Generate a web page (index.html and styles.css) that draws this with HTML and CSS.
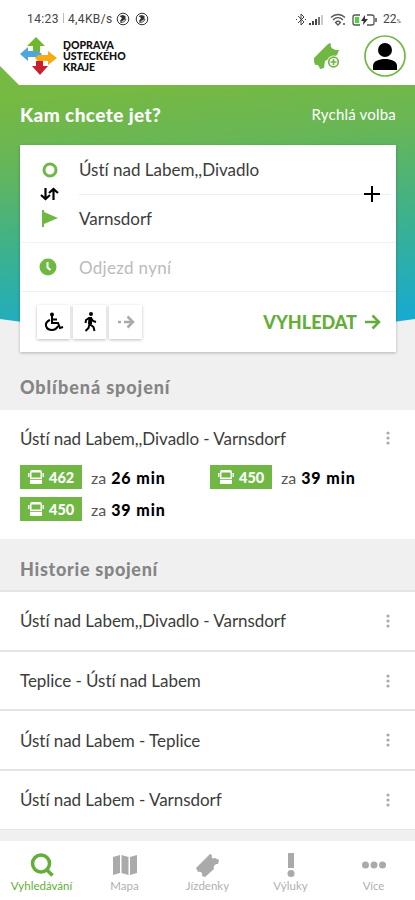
FILE: index.html
```html
<!DOCTYPE html>
<html lang="cs">
<head>
    <meta charset="UTF-8">
    <meta name="viewport" content="width=device-width, initial-scale=1.0">
    <title>Doprava Ústeckého kraje</title>
    <link rel="stylesheet" href="styles.css">
</head>
<body>
    <svg class="defs" width="0" height="0">
        <symbol id="dots" viewBox="0 0 6 14">
            <circle cx="3" cy="2" r="1.6"/><circle cx="3" cy="7" r="1.6"/><circle cx="3" cy="12" r="1.6"/>
        </symbol>
        <symbol id="bus" viewBox="0 0 16 16">
            <path d="M3 1h10l1 2v12H2V3z"/>
            <path d="M0 4h1.500v4H0zM14.500 4H16v4h-1.500z"/>
            <path d="M3.500 3.500h9v5h-9z" fill="#71b744"/>
            <path d="M2 10.500h12" stroke="#71b744" stroke-width=".8"/>
        </symbol>
        <symbol id="ticket" viewBox="0 0 24 24">
            <path d="M0 15L14 1l2 1c-1 3 1 4 3 3l4 2-1 4c-3 0-5 2-4 5L9 24l-3-1c1-3-1-5-4-4z"/>
        </symbol>
        <symbol id="face" viewBox="0 0 14 14">
            <circle cx="7" cy="7" r="5.800" fill="none" stroke="#333" stroke-width="1"/>
            <path d="M3.500 4l3-1 3 1v3L5 10l-1-1 2-3z" fill="#333"/>
            <path d="M4 10c2 1 5 0 6-3" fill="none" stroke="#333"/>
        </symbol>
    </svg>

    <header>
        <div class="status">
            <span class="time">14:23<i></i>4,4KB/s</span>
            <svg class="face" width="14" height="14"><use href="#face"/></svg>
            <svg class="face" width="14" height="14"><use href="#face"/></svg>
            <svg class="signals" width="86" height="16" viewBox="0 0 86 16">
                <path d="M3 5l6 6-3 3V3l3 3-6 6M1 8.500h1M10 8.500h1" fill="none" stroke="#444"/>
                <path d="M14 12h2v2h-2zM17 10h2v4h-2zM20 8h2v6h-2z" fill="#444"/>
                <path d="M23 6h2v8h-2z" fill="#777"/><path d="M26 4h2v10h-2z" fill="#ccc"/>
                <g fill="none" stroke="#555" stroke-width="1.300">
                    <path d="M36 6.500c4-4 10-4 14 0M38 9c3-3 7-3 10 0M40.500 11.500c1.500-1.500 3.500-1.500 5 0L43 14z"/>
                    <rect x="58" y="4" width="21" height="10" rx="2"/>
                </g>
                <path d="M48 12h2v2h-2zM80 7h2v4h-2z" fill="#777"/>
                <path d="M60 6h4v6h-4z" fill="#42dc2c"/>
                <path d="M65 3h7v12h-7z" fill="#fff"/>
                <path d="M70 4l-4 6h2.500l-.5 4 5-6h-3z" fill="#333"/>
            </svg>
            <span class="percent">22<small>%</small></span>
        </div>
        <div class="topbar">
            <svg class="logo" width="38" height="38" viewBox="0 0 38 38">
                <path d="M16 0l9 9h-5v6h-7V9H7z" fill="#70b82b"/>
                <path d="M0 17l8-7v4h10l4 3-3 3H8v4z" fill="#4ea6d9"/>
                <path d="M37 21l-9-7v4H18l-3 3 3 3h10v4z" fill="#f7aa13"/>
                <path d="M20 38l-8-9h4v-5h7v5h5z" fill="#c9202c"/>
            </svg>
            <div class="brand">DOPRAVA<br>ÚSTECKÉHO<br>KRAJE</div>
            <svg class="add-ticket" width="28" height="28" viewBox="0 0 28 28">
                <path d="M1 16L14 3l3-2 1 1c-1 3 1 5 5 6h3l-2 5-12 6-1 7-4 1c-1-4-3-5-5-4l-1-4z" fill="#70b744"/>
                <circle cx="20.500" cy="20" r="6.500" fill="#fff"/>
                <circle cx="20.500" cy="20" r="4.800" fill="#fff" stroke="#70b744" stroke-width="1.700"/>
                <path d="M20.500 17v6M17.500 20h6" stroke="#70b744" stroke-width="1.700"/>
            </svg>
            <svg class="avatar" width="42" height="42" viewBox="0 0 42 42">
                <circle cx="21" cy="21" r="20" fill="#fff" stroke="#70b744" stroke-width="1.700"/>
                <circle cx="21" cy="15" r="7"/>
                <path d="M9 35v-4c0-5 6-7 12-7s12 2 12 7v4z"/>
            </svg>
        </div>
    </header>

    <section class="hero">
        <div class="hero-head">
            <h1>Kam chcete jet?</h1>
            <span class="quick">Rychlá volba</span>
        </div>
        <div class="search">
            <div class="route">
                <div class="route-icons">
                    <svg width="16" height="16"><circle cx="8" cy="8" r="6" fill="none" stroke="#70b744" stroke-width="3"/></svg>
                    <svg width="20" height="16" viewBox="0 0 20 16" fill="none" stroke="#000" stroke-width="2.200"><path d="M5.500 2v11M1 9l4.500 4L10 9M13.500 14V3M9 7l4.500-4L18 7"/></svg>
                    <svg width="16" height="18" viewBox="0 0 16 18" fill="#70b744"><path d="M0 0h2v17H0zM2 2l14 6-14 6z"/></svg>
                </div>
                <div class="stops">
                    <div class="stop">Ústí nad Labem,,Divadlo</div>
                    <div class="stop to">Varnsdorf</div>
                    <svg class="plus" width="16" height="16" viewBox="0 0 16 16"><path d="M8 0v16M0 8h16" stroke="#000" stroke-width="2"/></svg>
                </div>
            </div>
            <div class="when">
                <svg width="18" height="18" viewBox="0 0 18 18"><circle cx="9" cy="9" r="8.500" fill="#70b744"/><path d="M8.500 4v5.500l3 2.500" fill="none" stroke="#fff" stroke-width="2"/></svg>
                <span>Odjezd nyní</span>
            </div>
            <div class="actions">
                <div class="option">
                    <svg width="20" height="20" viewBox="0 0 20 20" fill="none" stroke="#000" stroke-width="2"><circle cx="8" cy="2.500" r="2" fill="#000" stroke="none"/><path d="M8 4v7h6l2 5 3-1M8 7.500h5M6 8c-7 3-4 10 2 10 3 0 5-2 6-4"/></svg>
                </div>
                <div class="option">
                    <svg width="20" height="20" viewBox="0 0 20 20" fill="none" stroke="#000" stroke-width="2"><circle cx="11" cy="2" r="2" fill="#000" stroke="none"/><path d="M9.500 5v7l4 3 1 4M9.500 12l-1 4-3 3M9 6L6 8l-.5 3M11 6l2 3 3 1"/><path d="M9 5h3v7H8z" fill="#000" stroke="none"/></svg>
                </div>
                <div class="option">
                    <svg width="18" height="14" viewBox="0 0 18 14" fill="none" stroke="#aaa" stroke-width="2.500"><path d="M1 7h3M7 7h9M10.500 1.500L16 7l-5.500 5.500"/></svg>
                </div>
                <div class="submit">VYHLEDAT
                    <svg width="17" height="16" viewBox="0 0 17 16" fill="none" stroke="#64ad38" stroke-width="2.500"><path d="M1 8h14M8.500 1.500L15 8l-6.500 6.500"/></svg>
                </div>
            </div>
        </div>
    </section>

    <h2>Oblíbená spojení</h2>
    <section class="favorite">
        <div class="title"><span>Ústí nad Labem,,Divadlo - Varnsdorf</span><svg class="dots" width="6" height="14"><use href="#dots"/></svg></div>
        <div class="departures">
            <div class="departure"><span class="line"><svg width="16" height="16"><use href="#bus"/></svg>462</span>za <b>26 min</b></div>
            <div class="departure"><span class="line"><svg width="16" height="16"><use href="#bus"/></svg>450</span>za <b>39 min</b></div>
            <div class="departure"><span class="line"><svg width="16" height="16"><use href="#bus"/></svg>450</span>za <b>39 min</b></div>
        </div>
    </section>

    <h2 class="history-head">Historie spojení</h2>
    <section class="history">
        <div class="item"><span>Ústí nad Labem,,Divadlo - Varnsdorf</span><svg class="dots" width="6" height="14"><use href="#dots"/></svg></div>
        <div class="item"><span>Teplice - Ústí nad Labem</span><svg class="dots" width="6" height="14"><use href="#dots"/></svg></div>
        <div class="item"><span>Ústí nad Labem - Teplice</span><svg class="dots" width="6" height="14"><use href="#dots"/></svg></div>
        <div class="item"><span>Ústí nad Labem - Varnsdorf</span><svg class="dots" width="6" height="14"><use href="#dots"/></svg></div>
    </section>

    <nav>
        <div class="tab active">
            <svg width="24" height="24" viewBox="0 0 24 24" fill="none" stroke="#64ad38" stroke-width="3.500"><circle cx="11" cy="10.500" r="8.500"/><path d="M16.500 16.500l6 6"/></svg>
            <span>Vyhledávání</span>
        </div>
        <div class="tab">
            <svg width="26" height="24" viewBox="0 0 26 24"><path d="M1 4l7-2v18l-7 2zM9.500 2l7 2v18l-7-2zM18 4l7-2v18l-7 2z"/></svg>
            <span>Mapa</span>
        </div>
        <div class="tab">
            <svg width="24" height="24"><use href="#ticket"/></svg>
            <span>Jízdenky</span>
        </div>
        <div class="tab">
            <svg width="24" height="24" viewBox="0 0 24 24"><path d="M9 0h6v15H9z"/><circle cx="12" cy="20.500" r="3.500"/></svg>
            <span>Výluky</span>
        </div>
        <div class="tab">
            <svg width="24" height="24" viewBox="0 0 24 24"><circle cx="3.500" cy="12" r="3.500"/><circle cx="12" cy="12" r="3.500"/><circle cx="20.500" cy="12" r="3.500"/></svg>
            <span>Více</span>
        </div>
    </nav>
</body>
</html>
```
FILE: styles.css
```css
* {
    box-sizing: border-box;
}
body {
    margin: 0;
    height: 900px;
    display: flex;
    flex-direction: column;
    overflow: hidden;
    background-color: #f0f0f0;
    font-family: Lato, sans-serif;
    font-size: 17px;
    font-variant-ligatures: none;
    color: #3c3c3c;
}
svg {
    display: block;
    flex-shrink: 0;
}
.defs {
    position: absolute;
}
header {
    height: 85px;
    flex-shrink: 0;
    background-color: #fff;
}
.status {
    height: 34px;
    padding: 4px 10px 0 27px;
    display: flex;
    align-items: center;
    font-family: Roboto, sans-serif;
    font-size: 12px;
    color: #444;
}
.time {
    width: 87px;
    letter-spacing: 0.4px;
    white-space: nowrap;
}
.time i {
    display: inline-block;
    width: 1px;
    height: 10px;
    margin: 0 4px;
    background-color: #bbb;
}
.face {
    margin-left: 2px;
    margin-right: 3px;
}
.signals {
    margin-left: auto;
}
.percent {
    width: 22px;
    margin-left: 2px;
    white-space: nowrap;
}
.percent small {
    font-size: 6px;
}
.topbar {
    display: flex;
    align-items: center;
    height: 44px;
    padding: 0 9px 0 20px;
}
.brand {
    margin-left: 5px;
    font-size: 10.5px;
    line-height: 11px;
    font-weight: 900;
    color: #111;
}
.add-ticket {
    margin-left: auto;
}
.avatar {
    margin-left: 23px;
}
.hero {
    height: 286px;
    margin-top: -19px;
    padding: 19px 19px 0 20px;
    flex-shrink: 0;
    background: linear-gradient(175deg, #76b943 12%, #67b657 33%, #3bb18f 65%, #19abce 96%) no-repeat;
    background-size: 100% 257px;
    clip-path: polygon(0 0, 19px 19px, 100% 19px, 100% 300px, 0 300px);
    position: relative;
}
/* shallow point under the gradient */
.hero::after {
    content: "";
    position: absolute;
    left: 0;
    right: 0;
    top: 253px;
    height: 14px;
    background-color: #f0f0f0;
    clip-path: polygon(0 0, 50% 28px, 100% 0, 100% 100%, 0 100%);
}
.hero-head {
    height: 60px;
    padding-bottom: 2px;
    display: flex;
    align-items: center;
    justify-content: space-between;
    color: #fff;
}
h1 {
    margin: 0;
    font-size: 19px;
    font-weight: 900;
    letter-spacing: 0.4px;
}
.quick {
    font-size: 15px;
    letter-spacing: 0.2px;
}
.search {
    position: relative;
    z-index: 1;
    height: 207px;
    background-color: #fff;
    box-shadow: 0 1px 3px rgba(0, 0, 0, 0.25);
}
.route {
    display: flex;
    height: 98px;
    border-bottom: 1px solid #f2f2f2;
}
.route-icons {
    width: 59px;
    padding-top: 17px;
    display: flex;
    flex-direction: column;
    align-items: center;
    gap: 8px;
}
.stops {
    position: relative;
    flex: 1;
    margin-right: 5px;
}
.stop {
    height: 50px;
    display: flex;
    align-items: center;
    border-bottom: 1px solid #eee;
}
.stop.to {
    height: 47px;
    border: none;
}
.plus {
    position: absolute;
    right: 11px;
    top: 41px;
}
.when {
    height: 49px;
    padding-left: 19px;
    display: flex;
    align-items: center;
    gap: 22px;
    border-bottom: 1px solid #f0f0f0;
    color: #bbb;
    letter-spacing: 0.3px;
}
.actions {
    height: 60px;
    padding: 0 15px 0 17px;
    display: flex;
    align-items: center;
    gap: 3px;
}
.option {
    width: 33px;
    height: 34px;
    display: flex;
    align-items: center;
    justify-content: center;
    box-shadow: 0 1px 3px rgba(0, 0, 0, 0.25);
}
.submit {
    margin-left: auto;
    display: flex;
    align-items: center;
    gap: 7px;
    font-size: 18px;
    font-weight: 900;
    color: #64ad38;
}
h2 {
    margin: 0;
    height: 58px;
    padding: 11px 20px 0;
    flex-shrink: 0;
    line-height: 48px;
    font-size: 18px;
    font-weight: 900;
    letter-spacing: 0.9px;
    color: #858585;
}
.history-head {
    height: 51px;
    padding-top: 6px;
    letter-spacing: 0.7px;
}
.favorite {
    height: 129px;
    padding: 10px 24px 0 20px;
    flex-shrink: 0;
    background-color: #fff;
}
.title, .item {
    display: flex;
    align-items: center;
    justify-content: space-between;
    letter-spacing: -0.05px;
}
.title {
    height: 36px;
}
.dots {
    fill: #aaa;
}
.departures {
    display: grid;
    grid-template-columns: 190px 1fr;
    row-gap: 8px;
    margin-top: 9px;
}
.departure {
    display: flex;
    align-items: center;
    height: 24px;
    font-size: 16px;
    color: #555;
}
.departure b {
    margin-left: 5px;
    font-weight: 900;
    letter-spacing: 0.9px;
    color: #000;
}
.line {
    display: flex;
    align-items: center;
    gap: 5px;
    width: 62px;
    height: 24px;
    margin-right: 9px;
    padding-left: 8px;
    background-color: #71b744;
    fill: #fff;
    color: #fff;
    font-size: 14.5px;
    font-weight: 900;
}
.history {
    background-color: #fff;
    flex-shrink: 0;
    border-bottom: 1px solid #e8e8e8;
}
.item {
    height: 59.7px;
    padding: 0 24px 0 20px;
    border-top: 2px solid #e4e4e4;
}
nav {
    height: 59px;
    margin-top: auto;
    flex-shrink: 0;
    display: grid;
    grid-template-columns: repeat(5, 1fr);
    background-color: #fff;
}
.tab {
    padding-top: 12px;
    display: flex;
    flex-direction: column;
    align-items: center;
    fill: #aaa;
    color: #b0b0b0;
    font-size: 11.5px;
    line-height: 17px;
}
.tab.active {
    color: #64ad38;
}
```
